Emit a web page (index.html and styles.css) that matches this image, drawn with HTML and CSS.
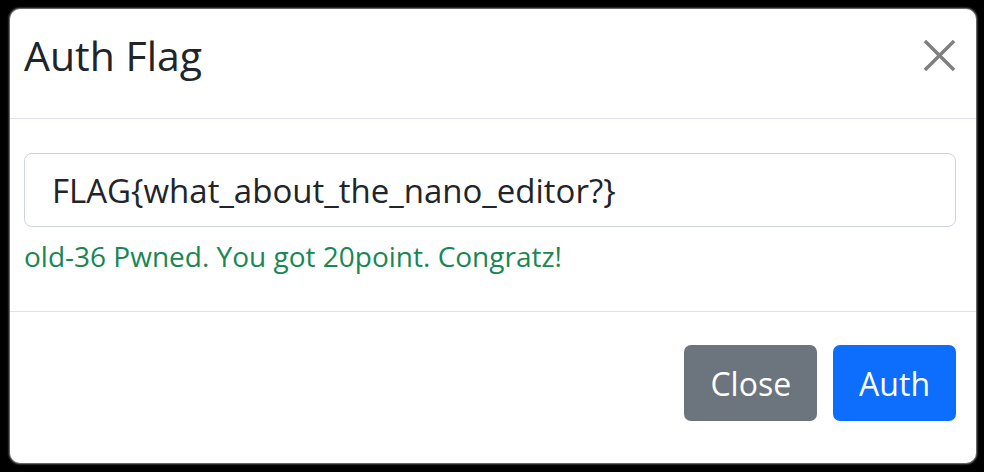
FILE: index.html
```html
<!DOCTYPE html>
<html>
<head>
<meta charset="utf-8">
<link rel="stylesheet" href="styles.css">
</head>
<body>
<div class="modal">
  <div class="modal-header">
    <h5 class="modal-title">Auth Flag</h5>
    <button class="btn-close" aria-label="Close">
      <svg viewBox="0 0 34 34" width="33" height="33"><path d="M2 2L32 32M32 2L2 32" stroke="#808080" stroke-width="3.6" fill="none"/></svg>
    </button>
  </div>
  <div class="modal-body">
    <div class="form-control">FLAG{what_about_the_nano_editor?}</div>
    <div class="feedback">old-36 Pwned. You got 20point. Congratz!</div>
  </div>
  <div class="modal-footer">
    <button class="btn btn-secondary">Close</button>
    <button class="btn btn-primary">Auth</button>
  </div>
</div>
</body>
</html>
```
FILE: styles.css
```css
html, body {
  margin: 0;
  padding: 0;
  background: #000;
  height: 472px;
  overflow: hidden;
}
body {
  font-family: "Open Sans", "Noto Sans", sans-serif;
  color: #212529;
}
.modal {
  margin: 9px 0 0 10px;
  width: 966px;
  height: 454px;
  background: #fff;
  border-radius: 10px;
  box-shadow: 0 0 2px 1px rgba(200,200,200,.7);
  display: flex;
  flex-direction: column;
  overflow: hidden;
}
.modal-header {
  height: 110px;
  box-sizing: border-box;
  border-bottom: 1px solid #dee2e6;
  display: flex;
  align-items: center;
  justify-content: space-between;
  padding: 0 20px 16px 14px;
}
.modal-title {
  margin: 0;
  font-size: 41px;
  font-weight: 400;
  line-height: 1;
}
.btn-close {
  border: 0;
  background: none;
  padding: 0;
  width: 33px;
  height: 33px;
  display: flex;
}
.modal-body {
  height: 193px;
  box-sizing: border-box;
  padding: 34px 20px 0 14px;
  border-bottom: 1px solid #dee2e6;
}
.form-control {
  height: 74px;
  box-sizing: border-box;
  border: 1px solid #ced4da;
  border-radius: 8px;
  padding: 0 27px;
  display: flex;
  align-items: center;
  font-size: 33px;
}
.feedback {
  margin-top: 11px;
  color: #198754;
  font-size: 28px;
  line-height: 1.3;
}
.modal-footer {
  flex: 1;
  display: flex;
  justify-content: flex-end;
  align-items: flex-start;
  gap: 16px;
  padding: 33px 20px 0 0;
}
.btn {
  height: 76px;
  border: 0;
  border-radius: 7px;
  color: #fff;
  font-family: inherit;
  font-size: 32px;
  padding: 0 26px;
}
.btn-secondary { background: #6c757d; }
.btn-primary { background: #0d6efd; }
```
